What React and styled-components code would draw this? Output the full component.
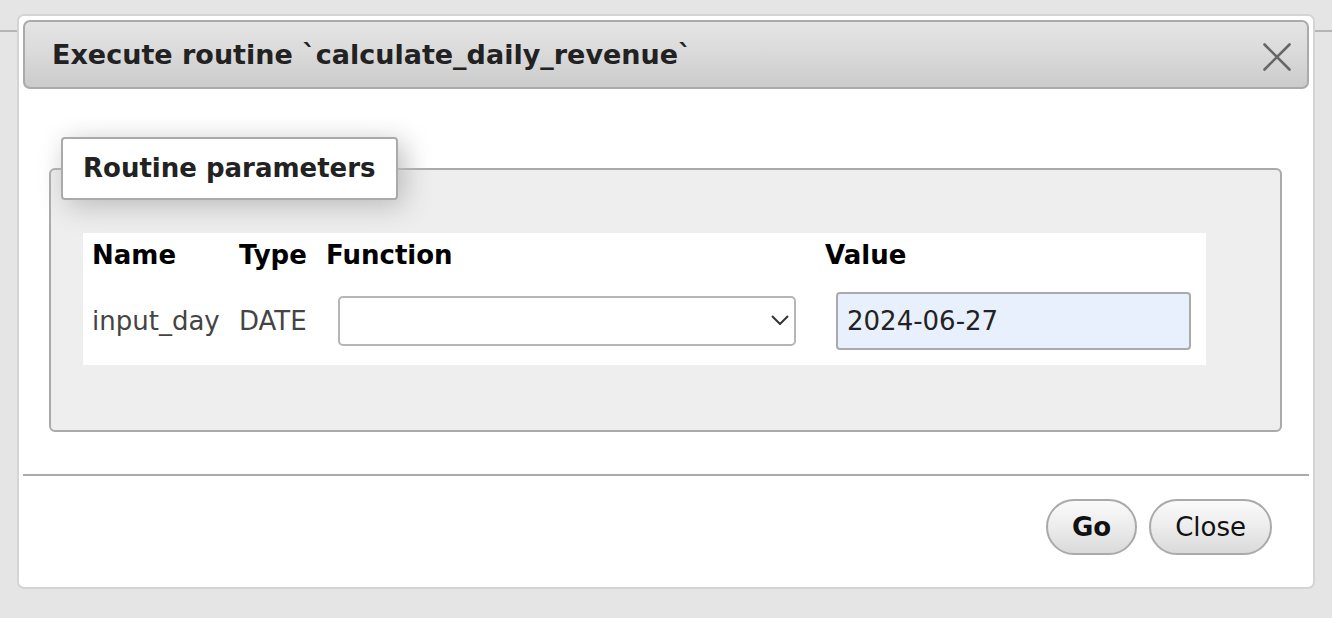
import React from "react";
import styled, { createGlobalStyle } from "styled-components";

const GlobalStyle = createGlobalStyle`
  html, body {
    margin: 0;
    padding: 0;
    background: #e5e5e5;
    font-family: "DejaVu Sans", Verdana, sans-serif;
  }
  * { box-sizing: border-box; }
`;

const Page = styled.div`
  position: relative;
  width: 1332px;
  height: 618px;
  overflow: hidden;
  background: #e5e5e5;
`;

const TopBar = styled.div`
  height: 32px;
  border-bottom: 2px solid #b4b4b4;
  background: #e5e5e5;
`;

const Dialog = styled.div`
  position: absolute;
  left: 17px;
  top: 14px;
  width: 1298px;
  background: #fff;
  border: 2px solid #d4d4d4;
  border-radius: 7px;
  padding: 4px;
`;

const TitleBar = styled.div`
  height: 69px;
  display: flex;
  align-items: center;
  justify-content: space-between;
  padding: 0 15px 0 27px;
  border: 2px solid #aaa;
  border-radius: 7px;
  background: linear-gradient(to bottom, #e4e4e4 0%, #dcdcdc 40%, #cbcbcb 100%);
`;

const Title = styled.span`
  font-size: 27px;
  font-weight: bold;
  color: #222;
  white-space: nowrap;
`;

const CloseX = styled.button`
  width: 30px;
  height: 30px;
  padding: 0;
  border: 0;
  background: transparent;
  display: flex;
  align-items: center;
  justify-content: center;
  margin-top: 4px;
`;

const Content = styled.div`
  padding: 48px 27px 0 26px;
`;

const Fieldset = styled.fieldset`
  margin: 0;
  padding: 33px 0 65px 10px;
  border: 2px solid #aaa;
  border-radius: 6px;
  background: #eee;
  min-width: 0;
`;

const Legend = styled.legend`
  padding: 14px 20px;
  line-height: 31px;
  font-size: 26px;
  font-weight: bold;
  color: #222;
  background: #fff;
  border: 2px solid #aaa;
  border-radius: 4px;
  box-shadow: 6px 6px 28px #bbb;
`;

const ParamTable = styled.table`
  margin-left: 22px;
  width: 1123px;
  table-layout: fixed;
  border-collapse: collapse;
  background: #fff;
  font-size: 26px;
`;

const Th = styled.th`
  text-align: left;
  font-weight: bold;
  color: #000;
  padding: 7px 9px;
  line-height: 30px;
  white-space: nowrap;
`;

const Td = styled.td`
  padding: 15px 9px;
  color: #444;
  line-height: 30px;
  white-space: nowrap;
  vertical-align: middle;
`;

const SelectWrap = styled.div`
  position: relative;
  width: 458px;
  margin-left: 12px;
`;

const Select = styled.select`
  appearance: none;
  display: block;
  width: 100%;
  height: 50px;
  border: 2px solid #b5b5b5;
  border-radius: 5px;
  background: #fff;
  font-family: inherit;
  font-size: 26px;
`;

const Chevron = styled.svg`
  position: absolute;
  right: 7px;
  top: 19px;
  pointer-events: none;
`;

const ValueInput = styled.input`
  display: block;
  width: 355px;
  height: 58px;
  margin-left: 11px;
  padding: 0 9px;
  border: 2px solid #aaa;
  border-radius: 4px;
  background: #e8f0fe;
  color: #222;
  font-family: inherit;
  font-size: 26px;
`;

const ButtonPane = styled.div`
  margin-top: 42px;
  border-top: 2px solid #aaa;
  padding: 23px 37px 28px 0;
  display: flex;
  justify-content: flex-end;
  gap: 12px;
`;

const Button = styled.button`
  height: 56px;
  padding: 0 24px;
  border: 2px solid #aaa;
  border-radius: 28px;
  background: linear-gradient(to bottom, #fafafa 0%, #ececec 50%, #dadada 100%);
  font-family: inherit;
  font-size: 26px;
  font-weight: ${(p) => (p.$primary ? "bold" : "normal")};
  color: #111;
`;

export default function App() {
  return (
    <>
      <GlobalStyle />
      <Page>
        <TopBar />
        <Dialog>
          <TitleBar>
            <Title>Execute routine `calculate_daily_revenue`</Title>
            <CloseX aria-label="Close">
              <svg width="28" height="28" viewBox="0 0 28 28">
                <path d="M1.5 1.5 L26.5 26.5 M26.5 1.5 L1.5 26.5" stroke="#666" strokeWidth="2.6" strokeLinecap="round" />
              </svg>
            </CloseX>
          </TitleBar>
          <Content>
            <Fieldset>
              <Legend>Routine parameters</Legend>
              <ParamTable>
                <colgroup>
                  <col style={{ width: 147 }} />
                  <col style={{ width: 87 }} />
                  <col style={{ width: 499 }} />
                  <col style={{ width: 390 }} />
                </colgroup>
                <thead>
                  <tr>
                    <Th>Name</Th>
                    <Th>Type</Th>
                    <Th>Function</Th>
                    <Th>Value</Th>
                  </tr>
                </thead>
                <tbody>
                  <tr>
                    <Td>input_day</Td>
                    <Td>DATE</Td>
                    <Td>
                      <SelectWrap>
                        <Select defaultValue="">
                          <option value=""></option>
                        </Select>
                        <Chevron width="18" height="10" viewBox="0 0 18 10">
                          <path d="M1 1 L9 9 L17 1" fill="none" stroke="#333" strokeWidth="2" />
                        </Chevron>
                      </SelectWrap>
                    </Td>
                    <Td>
                      <ValueInput defaultValue="2024-06-27" />
                    </Td>
                  </tr>
                </tbody>
              </ParamTable>
            </Fieldset>
          </Content>
          <ButtonPane>
            <Button $primary>Go</Button>
            <Button>Close</Button>
          </ButtonPane>
        </Dialog>
      </Page>
    </>
  );
}
